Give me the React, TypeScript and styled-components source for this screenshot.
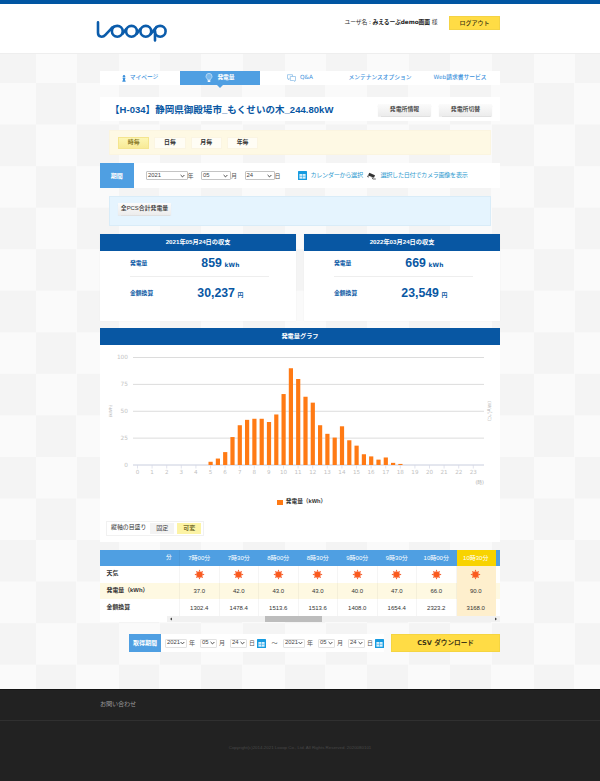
import React from "react";
import styled, { createGlobalStyle, css } from "styled-components";

const BLUE = "#0857a3";
const SKY = "#4f9fe2";
const YELLOW = "#ffdc45";

const GlobalStyle = createGlobalStyle`
  * { box-sizing: border-box; }
  body {
    margin: 0;
    background-color: #fafafa;
    background-image: repeating-conic-gradient(#fafafa 0 25%, #f4f4f4 0 50%);
    background-size: 83px 83.1px;
    background-position: 35px 83px;
    font-family: "Liberation Sans", "Noto Sans CJK JP", sans-serif;
    font-size: 6px;
    line-height: 1;
    color: #333;
  }
  button { font-family: inherit; border: 0; padding: 0; margin: 0; line-height: 1; white-space: nowrap; }
`;

const Page = styled.div`
  height: 781px;
  display: flex;
  flex-direction: column;
  overflow: hidden;
`;

const Header = styled.header`
  height: 54px;
  border-top: 4px solid #0055a2;
  border-bottom: 1px solid #eeeeee;
  background: #fff;
  display: flex;
  justify-content: space-between;
  padding: 0 100px 0 96px;
`;

const Logo = styled.svg`
  margin-top: 16px;
`;

const Account = styled.div`
  display: flex;
  height: 14px;
  margin-top: 12px;
  align-items: center;
`;

const UserName = styled.p`
  margin: 0 11.5px 0 0;
  font-family: "DejaVu Sans", "Noto Sans CJK JP", sans-serif;
  font-size: 5.8px;
  letter-spacing: -0.08px;
  white-space: nowrap;
  strong { color: #222; }
`;

const LogoutButton = styled.button`
  width: 51px;
  height: 14px;
  background: ${YELLOW};
  border: 1px solid #f4d344;
  font-size: 6px;
  font-weight: 500;
  color: #3d3512;
`;

const Main = styled.main`
  width: 400px;
  margin: 17px auto 0;
  flex: 1;
  display: flex;
  flex-direction: column;
`;

const Nav = styled.nav`
  display: grid;
  grid-template-columns: repeat(5, 80px);
  height: 14px;
  background: #fff;
`;

const Tab = styled.a<{ $active?: boolean }>`
  position: relative;
  display: flex;
  align-items: center;
  justify-content: center;
  gap: 4px;
  font-family: "DejaVu Sans", "Noto Sans CJK JP", sans-serif;
  font-size: 5.75px;
  font-weight: 500;
  white-space: nowrap;
  color: #3c91dc;
  ${(p) =>
    p.$active &&
    css`
      background: ${SKY};
      color: #fff;
      font-weight: 700;
      &::after {
        content: "";
        position: absolute;
        top: 100%;
        left: 37px;
        border: 3px solid transparent;
        border-top-color: ${SKY};
        border-bottom: 0;
      }
    `}
`;

const TitleBar = styled.section`
  height: 24px;
  margin-top: 12px;
  padding: 1px 8px 0 10px;
  background: #fff;
  display: flex;
  align-items: center;
`;

const Title = styled.h1`
  margin: 0;
  flex: 1;
  font-size: 9.5px;
  letter-spacing: 0.04px;
  color: ${BLUE};
  white-space: nowrap;
`;

const GrayButton = styled.button<{ $w: number; $h?: number }>`
  width: ${(p) => p.$w}px;
  height: ${(p) => p.$h ?? 12}px;
  margin-left: 8px;
  background: linear-gradient(#fbfbfb, #ececec);
  box-shadow: 0 0.5px 1px #e0e0e0;
  color: #333;
  font-size: 5.9px;
  font-weight: 500;
`;

const AxisPanel = styled.section`
  height: 25px;
  margin: 9px 9px 0;
  padding: 0 8px;
  background: #fef9e4;
  border: 1px solid #fbf5e0;
  display: flex;
  align-items: center;
  gap: 5px;
`;

const AxisButton = styled.button<{ $active?: boolean }>`
  width: 31.3px;
  height: 12px;
  font-size: 5.9px;
  font-weight: 700;
  color: ${(p) => (p.$active ? "#8a7a28" : "#333")};
  background: ${(p) => (p.$active ? "linear-gradient(#fdf6b4, #f8ea96)" : "#fffdf5")};
  border: 1px solid ${(p) => (p.$active ? "#f4e58f" : "#fbf5e2")};
`;

const PeriodBar = styled.section`
  height: 25px;
  margin-top: 8px;
  background: #fff;
  display: flex;
  align-items: center;
`;

const BlueLabel = styled.div<{ $w: number }>`
  width: ${(p) => p.$w}px;
  flex-shrink: 0;
  align-self: stretch;
  display: flex;
  align-items: center;
  justify-content: center;
  background: ${SKY};
  color: #fff;
  font-size: 6px;
  font-weight: 700;
`;

const SelectBox = styled.div<{ $w: number; $ml: number; $light?: boolean }>`
  width: ${(p) => p.$w}px;
  flex-shrink: 0;
  height: 9px;
  margin-left: ${(p) => p.$ml}px;
  padding: 0 ${(p) => (p.$light ? 1 : 2)}px 0 1px;
  border: 1px solid ${(p) => (p.$light ? "#e2e2e2" : "#c4c4c4")};
  border-radius: 1px;
  background: #fff;
  display: flex;
  align-items: center;
  justify-content: space-between;
  font-size: 5.9px;
  color: #444;
`;

const Unit = styled.span<{ $ml?: number }>`
  width: 6px;
  flex-shrink: 0;
  margin-left: ${(p) => p.$ml ?? 0}px;
  color: #555;
`;

const LinkText = styled.a<{ $w: number }>`
  width: ${(p) => p.$w}px;
  margin-left: 4px;
  font-size: 6.15px;
  letter-spacing: -0.34px;
  white-space: nowrap;
  color: #2f9bd0;
`;

const IconSlot = styled.span<{ $ml: number }>`
  display: flex;
  flex-shrink: 0;
  margin-left: ${(p) => p.$ml}px;
`;

const PcsPanel = styled.section`
  height: 30px;
  margin: 8px 9px 0;
  background: #e5f4fe;
  border: 1px solid #d9ecf8;
  padding: 6px 0 0 -1px;
  display: flex;
  align-items: flex-start;
  padding-top: 6px;
`;

const Summary = styled.section`
  display: grid;
  grid-template-columns: 196px 196px;
  gap: 8px;
  margin-top: 8px;
`;

const Card = styled.article`
  height: 87px;
  background: #fff;
  box-shadow: 0 0 1px #e4e4e4;
`;

const BarHeading = styled.h2`
  margin: 0;
  height: 16.5px;
  background: ${BLUE};
  color: #fff;
  font-size: 6.2px;
  display: flex;
  align-items: center;
  justify-content: center;
`;

const Metric = styled.div<{ $last?: boolean }>`
  display: grid;
  grid-template-columns: 51px 79px;
  height: ${(p) => (p.$last ? 33 : 26)}px;
  margin: 0 27px 0 30px;
  padding-top: 1px;
  align-items: center;
  color: ${BLUE};
  font-weight: 700;
  border-bottom: ${(p) => (p.$last ? 0 : 1)}px solid #eeeeee;
  font-size: 5.8px;
`;

const Amount = styled.span`
  text-align: center;
  font-size: 12.3px;
  white-space: nowrap;
  small {
    margin-left: -0.8px;
    font-family: "DejaVu Sans", "Noto Sans CJK JP", sans-serif;
    font-size: 5.9px;
    letter-spacing: 0.2px;
  }
`;

const GraphPanel = styled.section`
  height: 214px;
  margin-top: 7px;
  background: #fff;
  display: flex;
  flex-direction: column;
`;

const Chart = styled.svg`
  display: block;
  flex-shrink: 0;
  font-family: "DejaVu Sans", "Noto Sans CJK JP", sans-serif;
`;

const Legend = styled.div`
  display: flex;
  align-items: center;
  justify-content: center;
  gap: 3px;
  height: 8px;
  margin: 7.5px 0 0 3px;
  font-size: 5.7px;
  font-weight: 700;
  &::before {
    content: "";
    width: 6px;
    height: 5px;
    background: #ff7a14;
  }
`;

const ScaleBox = styled.div`
  width: 98px;
  height: 15px;
  margin: 14.5px 0 0 6px;
  padding-left: 4px;
  border: 1px solid #f1f1f1;
  display: flex;
  align-items: center;
  white-space: nowrap;
  font-size: 5.9px;
`;

const ScaleButton = styled.button<{ $active?: boolean }>`
  width: 24px;
  height: 11px;
  margin-left: ${(p) => (p.$active ? 3 : 4)}px;
  font-size: 6px;
  font-weight: ${(p) => (p.$active ? 700 : 400)};
  color: ${(p) => (p.$active ? "#77702f" : "#444")};
  background: ${(p) => (p.$active ? "#fcf3a5" : "#f3f3f3")};
`;

const TableWrap = styled.section`
  margin-top: 8px;
  background: #fff;
`;

const Row = styled.div<{ $kind?: "head" | "energy" }>`
  display: grid;
  grid-template-columns: 66px 14px repeat(8, 39.5px) 4px;
  height: ${(p) => (p.$kind === "head" ? 16 : 16.7)}px;
  background: ${(p) => (p.$kind === "head" ? SKY : p.$kind === "energy" ? "#fef9e2" : "#fff")};
`;

const RowLabel = styled.div`
  padding-left: 6.5px;
  display: flex;
  align-items: center;
  font-size: 5.9px;
  font-weight: 700;
`;

const CutCell = styled.div`
  display: flex;
  align-items: center;
  color: #fff;
  font-size: 5.6px;
  border-right: 1px solid rgba(0, 0, 0, 0.04);
`;

const Cell = styled.div<{ $head?: boolean; $now?: boolean }>`
  display: flex;
  align-items: center;
  justify-content: center;
  font-size: 6px;
  white-space: nowrap;
  border-right: 1px solid rgba(0, 0, 0, ${(p) => (p.$now || p.$head ? 0 : 0.04)});
  color: ${(p) => (p.$head ? "#fff" : "#333")};
  background: ${(p) => (p.$now ? (p.$head ? "#f8d300" : "#feefcd") : "transparent")};
`;

const ScrollTrack = styled.div`
  height: 6px;
  margin-left: 67px;
  padding: 0 2px;
  background: #f1f1f1;
  display: flex;
  align-items: center;
  justify-content: space-between;
`;

const ScrollThumb = styled.div`
  width: 57px;
  height: 6px;
  margin: 0 auto 0 92px;
  background: #bdbdbd;
`;

const DownloadRow = styled.section`
  display: flex;
  height: 18px;
  margin: 12px 0 0 29px;
  justify-content: space-between;
`;

const Range = styled.div`
  width: 255px;
  background: #fff;
  display: flex;
  align-items: center;
`;

const Tilde = styled.span`
  width: 17px;
  flex-shrink: 0;
  text-align: center;
  color: #666;
`;

const CsvButton = styled.button`
  width: 109px;
  height: 18px;
  background: ${YELLOW};
  border: 1px solid #f5d541;
  color: #3f3615;
  font-family: "DejaVu Sans", "Noto Sans CJK JP", sans-serif;
  font-size: 6.6px;
  font-weight: 700;
`;

const Footer = styled.footer`
  height: 92px;
  background: #222;
  border-top: 1px solid #151515;
`;

const FooterLink = styled.div`
  height: 31px;
  padding: 10.5px 0 0 100px;
  border-bottom: 1px solid #303030;
  font-size: 6.2px;
  letter-spacing: -0.2px;
  color: #999;
`;

const Copyright = styled.p`
  margin: 25px 0 0;
  text-align: center;
  font-size: 4.4px;
  color: #484848;
`;

const Chevron = () => (
  <svg width="5" height="4" viewBox="0 0 5 4">
    <path d="M.6 1 2.5 2.9 4.4 1" fill="none" stroke="#333" strokeWidth="0.9" />
  </svg>
);

const CalendarIcon = () => (
  <svg width="9" height="9" viewBox="0 0 9 9">
    <rect width="9" height="9" rx=".5" fill="#169be0" />
    <rect x="1.4" y="3" width="6.2" height="4.7" fill="#d9f1fd" />
    <path d="M1.4 5.3h6.2M4.5 3v4.7" stroke="#38aae6" strokeWidth=".6" />
  </svg>
);

const CameraIcon = () => (
  <svg width="10" height="8" viewBox="0 0 10 8">
    <path d="M2.3.8 8 3.2 7 5.8 1 3.5Z" fill="#333" />
    <path d="M1 3.5.4 4.6 2 5M5 5.2 5.8 7h3" fill="none" stroke="#555" strokeWidth=".9" />
  </svg>
);

const PersonIcon = () => (
  <svg width="4" height="7" viewBox="0 0 4 7">
    <circle cx="2" cy="1.3" r="1.2" fill="#3c91dc" />
    <path d="M.4 2.7h3.2L2.9 4.5 3.8 6.8H.2L1.1 4.5Z" fill="#3c91dc" />
  </svg>
);

const BulbIcon = () => (
  <svg width="8" height="10" viewBox="0 0 8 10">
    <path d="M2.7 6.8C2.6 5.6 1 5.2 1 3.4a3 3 0 0 1 6 0c0 1.8-1.6 2.2-1.7 3.4Z" fill="#7ab9ec" stroke="#c5e1f8" strokeWidth=".8" />
    <path d="M2.7 8.1h2.6" stroke="#fff" strokeWidth="1.7" />
  </svg>
);

const TalkIcon = () => (
  <svg width="9" height="8" viewBox="0 0 9 8" fill="#fff" stroke="#83b8e5" strokeWidth=".7">
    <path d="M.5.7h5v4H2.6L1.5 5.8V4.7h-1Z" />
    <path d="M3.3 2.5h5.2v4h-.8v1L6.5 6.5H3.3Z" />
  </svg>
);

const SunIcon = () => (
  <svg width="11" height="11" viewBox="-5.5 -5.5 11 11">
    <circle r="3.1" fill="#fa5a1e" />
    {[0, 45, 90, 135, 180, 225, 270, 315].map((a) => (
      <path key={a} d="M-.9-3 0-5 .9-3Z" fill="#f4511e" transform={`rotate(${a})`} />
    ))}
  </svg>
);

const Select = ({ value, w, ml, light }: { value: string; w: number; ml: number; light?: boolean }) => (
  <SelectBox $w={w} $ml={ml} $light={light}>
    {value}
    <Chevron />
  </SelectBox>
);

const DateFields = ({ first }: { first: number }) => (
  <>
    <Select value="2021" w={22} ml={first} light />
    <Unit $ml={2}>年</Unit>
    <Select value="05" w={17} ml={5} light />
    <Unit $ml={2}>月</Unit>
    <Select value="24" w={17} ml={5} light />
    <Unit $ml={2}>日</Unit>
    <IconSlot $ml={2}>
      <CalendarIcon />
    </IconSlot>
  </>
);

const BARS = [3, 6, 12, 26, 37, 42, 43, 43, 40, 47, 66, 90, 80, 63.5, 58, 37, 29, 25.5, 36, 23, 18, 10, 8, 5, 7, 2, 1];
const LEVELS = [100, 75, 50, 25, 0];
const yOf = (v: number) => 120 - v * 1.075;

const EnergyChart = () => (
  <Chart width="400" height="146" viewBox="0 0 400 146">
    {LEVELS.map((v) => (
      <g key={v}>
        <line x1="33" x2="384" y1={yOf(v)} y2={yOf(v)} stroke={v ? "#dcdcdc" : "#c9cede"} />
        <text x="28" y={yOf(v) + 1.6} textAnchor="end" fontSize="5.8" fill="#c4c4c4">
          {v}
        </text>
      </g>
    ))}
    {Array.from({ length: 24 }, (_, h) => (
      <g key={h}>
        <line x1={37.5 + h * 14.6} x2={37.5 + h * 14.6} y1="120" y2="123.5" stroke="#d5d9e6" strokeWidth=".7" />
        <text x={37.5 + h * 14.6} y="128.5" textAnchor="middle" fontSize="5.6" fill="#bfbfbf">
          {h}
        </text>
      </g>
    ))}
    {BARS.map((v, i) => (
      <rect key={i} x={108.5 + i * 7.3} y={yOf(v)} width="4.2" height={v * 1.075} fill="#ff7a14" />
    ))}
    <text transform="translate(12 66) rotate(-90)" textAnchor="middle" fontSize="4.2" fill="#b5b5b5">
      (kWh)
    </text>
    <text transform="translate(388 66) rotate(90)" textAnchor="middle" fontSize="4.4" fill="#b5b5b5">
      (W/㎡,℃)
    </text>
    <text x="384" y="139" textAnchor="end" fontSize="4.8" fill="#aaa">
      (時)
    </text>
  </Chart>
);

const HOURS = [
  ["7時00分", "37.0", "1302.4"],
  ["7時30分", "42.0", "1478.4"],
  ["8時00分", "43.0", "1513.6"],
  ["8時30分", "43.0", "1513.6"],
  ["9時00分", "40.0", "1408.0"],
  ["9時30分", "47.0", "1654.4"],
  ["10時00分", "66.0", "2323.2"],
  ["10時30分", "90.0", "3168.0"],
];

const CARDS = [
  { title: "2021年05月24日の収支", energy: "859", money: "30,237" },
  { title: "2022年03月24日の収支", energy: "669", money: "23,549" },
];

export default function App() {
  return (
    <Page>
      <GlobalStyle />
      <Header>
        <Logo width="72" height="23" viewBox="0 0 72 23" fill="none" stroke="#0b5cab" strokeWidth="2.6" strokeLinecap="round">
          <path d="M2 2.4V12.8c0 4.4 4.8 5 7.4 2L16.2 7.6" />
          <circle cx="21.3" cy="11.3" r="5.4" />
          <circle cx="35.5" cy="11.3" r="5.4" />
          <circle cx="49.8" cy="11.3" r="5.4" />
          <circle cx="64.2" cy="11.3" r="5.4" />
          <path d="M16 7.8 18 6.6M26.6 13.6l3.6-4.6M40.8 13.6l3.6-4.6M54.8 13.8 60.4 7M59 11.5V20.4" />
        </Logo>
        <Account>
          <UserName>
            ユーザ名 : <strong>みえるーぷdemo画面</strong> 様
          </UserName>
          <LogoutButton>ログアウト</LogoutButton>
        </Account>
      </Header>

      <Main>
        <Nav>
          <Tab><PersonIcon />マイページ</Tab>
          <Tab $active><BulbIcon />発電量</Tab>
          <Tab><TalkIcon />Q&amp;A</Tab>
          <Tab>メンテナンスオプション</Tab>
          <Tab>Web請求書サービス</Tab>
        </Nav>

        <TitleBar>
          <Title>【H-034】静岡県御殿場市_もくせいの木_244.80kW</Title>
          <GrayButton $w={53}>発電所情報</GrayButton>
          <GrayButton $w={53}>発電所切替</GrayButton>
        </TitleBar>

        <AxisPanel>
          <AxisButton $active>時毎</AxisButton>
          <AxisButton>日毎</AxisButton>
          <AxisButton>月毎</AxisButton>
          <AxisButton>年毎</AxisButton>
        </AxisPanel>

        <PeriodBar>
          <BlueLabel $w={33.5}>期間</BlueLabel>
          <Select value="2021" w={41.5} ml={12.5} />
          <Unit>年</Unit>
          <Select value="05" w={30} ml={7.5} />
          <Unit>月</Unit>
          <Select value="24" w={30} ml={7.5} />
          <Unit>日</Unit>
          <IconSlot $ml={17}><CalendarIcon /></IconSlot>
          <LinkText $w={52}>カレンダーから選択</LinkText>
          <IconSlot $ml={4}><CameraIcon /></IconSlot>
          <LinkText $w={88}>選択した日付でカメラ画像を表示</LinkText>
        </PeriodBar>

        <PcsPanel>
          <GrayButton $w={53}>全PCS合計発電量</GrayButton>
        </PcsPanel>

        <Summary>
          {CARDS.map((c) => (
            <Card key={c.title}>
              <BarHeading>{c.title}</BarHeading>
              <Metric>
                発電量
                <Amount>{c.energy} <small>kWh</small></Amount>
              </Metric>
              <Metric $last>
                金額換算
                <Amount>{c.money} <small>円</small></Amount>
              </Metric>
            </Card>
          ))}
        </Summary>

        <GraphPanel>
          <BarHeading>発電量グラフ</BarHeading>
          <EnergyChart />
          <Legend>発電量（kWh）</Legend>
          <ScaleBox>
            縦軸の目盛り
            <ScaleButton>固定</ScaleButton>
            <ScaleButton $active>可変</ScaleButton>
          </ScaleBox>
        </GraphPanel>

        <TableWrap>
          <Row $kind="head">
            <RowLabel />
            <CutCell>分</CutCell>
            {HOURS.map((h, i) => (
              <Cell key={i} $head $now={i === 7}>{h[0]}</Cell>
            ))}
          </Row>
          <Row>
            <RowLabel>天気</RowLabel>
            <CutCell />
            {HOURS.map((_, i) => (
              <Cell key={i} $now={i === 7}><SunIcon /></Cell>
            ))}
          </Row>
          <Row $kind="energy">
            <RowLabel>発電量（kWh）</RowLabel>
            <CutCell />
            {HOURS.map((h, i) => (
              <Cell key={i} $now={i === 7}>{h[1]}</Cell>
            ))}
          </Row>
          <Row>
            <RowLabel>金額換算</RowLabel>
            <CutCell />
            {HOURS.map((h, i) => (
              <Cell key={i} $now={i === 7}>{h[2]}</Cell>
            ))}
          </Row>
          <ScrollTrack>
            <svg width="4" height="4" viewBox="0 0 4 4"><path d="M3 .5v3L1 2Z" fill="#444" /></svg>
            <ScrollThumb />
            <svg width="4" height="4" viewBox="0 0 4 4"><path d="M1 .5v3L3 2Z" fill="#444" /></svg>
          </ScrollTrack>
        </TableWrap>

        <DownloadRow>
          <Range>
            <BlueLabel $w={32}>取得期間</BlueLabel>
            <DateFields first={4} />
            <Tilde>～</Tilde>
            <DateFields first={0} />
          </Range>
          <CsvButton>CSV ダウンロード</CsvButton>
        </DownloadRow>
      </Main>

      <Footer>
        <FooterLink>お問い合わせ</FooterLink>
        <Copyright>Copyright(c)2014-2021 Looop Co., Ltd. All Rights Reserved. 2020080101</Copyright>
      </Footer>
    </Page>
  );
}
